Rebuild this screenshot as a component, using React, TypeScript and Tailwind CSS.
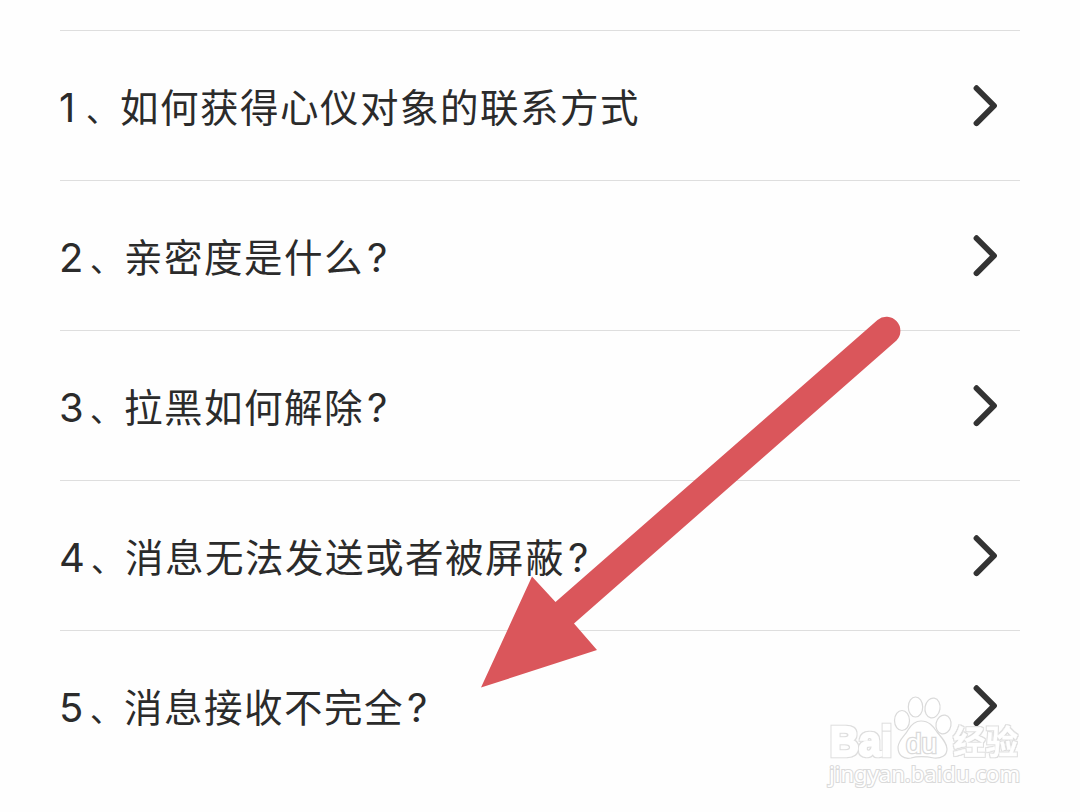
interface Question {
  num: string;
  numWidth: string;
  text: string;
  mark?: boolean;
}

const questions: Question[] = [
  { num: "1", numWidth: "w-[20px]", text: "如何获得心仪对象的联系方式" },
  { num: "2", numWidth: "w-[24px]", text: "亲密度是什么", mark: true },
  { num: "3", numWidth: "w-[24px]", text: "拉黑如何解除", mark: true },
  { num: "4", numWidth: "w-[25px]", text: "消息无法发送或者被屏蔽", mark: true },
  { num: "5", numWidth: "w-[24px]", text: "消息接收不完全", mark: true },
];

function Chevron() {
  return (
    <svg className="mr-[20px] h-[46px] w-[30px] shrink-0" viewBox="0 0 30 46" fill="none">
      <path d="M6.5 5.2 L24 22.7 L6.5 40.2" stroke="#333333" strokeWidth="5.8" strokeLinecap="round" strokeLinejoin="round" />
    </svg>
  );
}

function Row({ item }: { item: Question }) {
  return (
    <li className="flex h-[150px] items-center justify-between border-t border-[#dedede]">
      <div className="flex items-baseline whitespace-nowrap pt-[2px] text-[38.5px] leading-[56px] text-[#2b2b2b]">
        <span className={`${item.numWidth} -ml-px mr-px shrink-0 font-['Inter','Noto_Sans_CJK_SC',sans-serif] text-[40px]`}>{item.num}</span>
        <span className="w-[40px] shrink-0 pl-[6px] font-['Noto_Sans_CJK_SC',sans-serif] text-[32px]">、</span>
        <span className="font-['Noto_Sans_CJK_SC',sans-serif] tracking-[1.5px]">{item.text}</span>
        {item.mark && <span className="ml-[3px] font-['Inter','Noto_Sans_CJK_SC',sans-serif] text-[40px]">?</span>}
      </div>
      <Chevron />
    </li>
  );
}

function Arrow() {
  return (
    <svg className="pointer-events-none absolute left-[470px] top-[306px] h-[390px] w-[440px]" viewBox="470 306 440 390">
      <path
        d="M481 687.5 L532 576.5 L555.5 602 L877.5 320 A14 14 0 0 1 896.5 340.5 L574 623.5 L597 650 Z"
        fill="#da565b"
      />
    </svg>
  );
}

function Watermark() {
  return (
    <svg className="pointer-events-none absolute left-[820px] top-[690px] h-[110px] w-[220px]" viewBox="820 690 220 110">
      <defs>
        <filter id="rim" x="-5%" y="-10%" width="110%" height="120%">
          <feMorphology in="SourceAlpha" operator="dilate" radius="1" result="wide" />
          <feFlood floodColor="#dddddd" />
          <feComposite in2="wide" operator="in" result="edge" />
          <feMerge>
            <feMergeNode in="edge" />
            <feMergeNode in="SourceGraphic" />
          </feMerge>
        </filter>
      </defs>
      <g fill="#ffffff" stroke="#dadada" strokeWidth="1.2">
        <ellipse cx="902" cy="720.5" rx="7.5" ry="10" />
        <ellipse cx="915.5" cy="707" rx="7.2" ry="10" />
        <ellipse cx="932.5" cy="708" rx="7.5" ry="10" transform="rotate(10 932.5 708)" />
        <ellipse cx="943.5" cy="724.5" rx="7.5" ry="9.5" transform="rotate(10 943.5 724.5)" />
        <path d="M921 721 C929 721 933 726 937 732 C942 738 947 743 947 749 C947 756 941 758.5 934 758 C924 756 918 756 911 758 C903 759.5 898 755 898 747 C899 739 905 736 908 730 C911 725 915 721 921 721 Z" />
      </g>
      <g fill="#ffffff" stroke="#ffffff" filter="url(#rim)">
        <text x="830" y="756" fontSize="43" fontFamily="'Liberation Sans', sans-serif" fontWeight="700" strokeWidth="2.4" textLength="62" lengthAdjust="spacingAndGlyphs">Bai</text>
        <text x="953" y="753.5" fontSize="33" fontWeight="700" fontFamily="'Noto Sans CJK SC', sans-serif" strokeWidth="0.4" textLength="65" lengthAdjust="spacingAndGlyphs">经验</text>
      </g>
      <g fill="#ffffff" stroke="#dadada" paintOrder="stroke">
        <text x="906" y="752.5" fontSize="27" fontFamily="'Liberation Sans', sans-serif" fontWeight="400" strokeWidth="2.6" textLength="31" lengthAdjust="spacingAndGlyphs">du</text>
        <text x="829" y="782" fontSize="22.5" fontWeight="400" fontFamily="'Noto Sans', sans-serif" strokeWidth="2.2" textLength="191" lengthAdjust="spacingAndGlyphs">jingyan.baidu.com</text>
      </g>
    </svg>
  );
}

export default function App() {
  return (
    <main className="relative h-[812px] w-[1080px] overflow-hidden bg-[#fefefe] px-[60px] pt-[30px]">
      <ul className="flex flex-col">
        {questions.map((item) => (
          <Row key={item.num} item={item} />
        ))}
      </ul>
      <Arrow />
      <Watermark />
    </main>
  );
}
